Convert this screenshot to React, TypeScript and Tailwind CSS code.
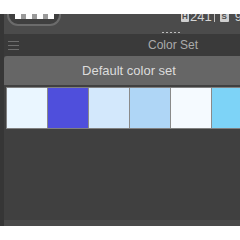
import React from "react";

const swatches = ["#eaf6ff", "#4f4fdc", "#d3e8fc", "#afd6f6", "#f5faff", "#7dd3f7"];

export default function App() {
  return (
    <div
      className="w-[240px] h-[240px] bg-white overflow-hidden flex flex-col"
      style={{ fontFamily: '"Liberation Sans", Arial, sans-serif' }}
    >
      <div className="h-[14px] shrink-0 bg-white relative z-10" />
      <div className="flex h-[212px] shrink-0">
        <div className="w-[4px] shrink-0 bg-[#363636]" />
        <div className="flex-1 flex flex-col min-w-0 overflow-hidden">
          {/* top bar */}
          <div className="h-[20px] shrink-0 bg-[#4b4b4b] flex items-start relative">
            <div className="ml-[3px] mt-[-10px] w-[54px] h-[22px] rounded-full border-2 border-[#6b6b6b] bg-[#3f3f3f] flex items-end justify-center pb-[5px]">
              <div className="flex h-[5px]">
                <div className="w-[6px] bg-white" />
                <div className="w-[5px] bg-[#9a9a9a]" />
                <div className="w-[6px] bg-white" />
                <div className="w-[5px] bg-[#9a9a9a]" />
                <div className="w-[6px] bg-white" />
                <div className="w-[5px] bg-[#9a9a9a]" />
                <div className="w-[6px] bg-white" />
              </div>
            </div>
            <div className="absolute left-[177px] top-[-4px] flex items-center text-[13px] leading-[13px] text-[#d4d4d4] whitespace-nowrap">
              <span className="w-[8px] h-[10px] bg-[#cfcfcf] text-[#4b4b4b] text-[8px] leading-[10px] font-bold text-center rounded-[1px]">H</span>
              <span className="ml-[1px]">241</span>
              <span className="w-[1px] h-[11px] bg-[#bdbdbd] ml-[2px] mr-[5px]" />
              <span className="w-[9px] h-[10px] bg-[#cfcfcf] text-[#4b4b4b] text-[8px] leading-[10px] font-bold text-center rounded-[1px]">S</span>
              <span className="ml-[6px]">9</span>
            </div>
            <div className="absolute left-[158px] bottom-[1px] flex gap-[2px]">
              <div className="w-[2px] h-[1px] bg-[#bdbdbd]" />
              <div className="w-[2px] h-[1px] bg-[#bdbdbd]" />
              <div className="w-[2px] h-[1px] bg-[#bdbdbd]" />
              <div className="w-[2px] h-[1px] bg-[#bdbdbd]" />
              <div className="w-[2px] h-[1px] bg-[#bdbdbd]" />
            </div>
          </div>
          {/* header */}
          <div className="h-[22px] shrink-0 bg-[#3a3a3a] flex items-center relative">
            <div className="ml-[4px] flex flex-col gap-[3px]">
              <div className="w-[11px] h-[1px] bg-[#6e6e6e]" />
              <div className="w-[11px] h-[1px] bg-[#6e6e6e]" />
              <div className="w-[11px] h-[1px] bg-[#6e6e6e]" />
            </div>
            <div className="absolute left-[144px] text-[12px] text-[#ababab] whitespace-nowrap">Color Set</div>
          </div>
          {/* body */}
          <div className="flex-1 bg-[#404040] flex flex-col">
            <div className="h-[29px] w-[250px] shrink-0 bg-[#666666] rounded-tl-[3px] flex items-center justify-center text-[13px] text-[#dcdcdc]">
              Default color set
            </div>
            <div className="mt-[2px] ml-[2px] flex border border-[#808080] w-[260px] shrink-0">
              {swatches.map((c, i) => (
                <div
                  key={i}
                  className="w-[41px] h-[40px] border-r border-[#8a8a8a] shrink-0"
                  style={{ backgroundColor: c }}
                />
              ))}
            </div>
            <div className="flex-1" />
            <div className="h-[6px] bg-[#4a4a4a] shrink-0" />
          </div>
        </div>
      </div>
      <div className="flex-1 bg-white" />
    </div>
  );
}
